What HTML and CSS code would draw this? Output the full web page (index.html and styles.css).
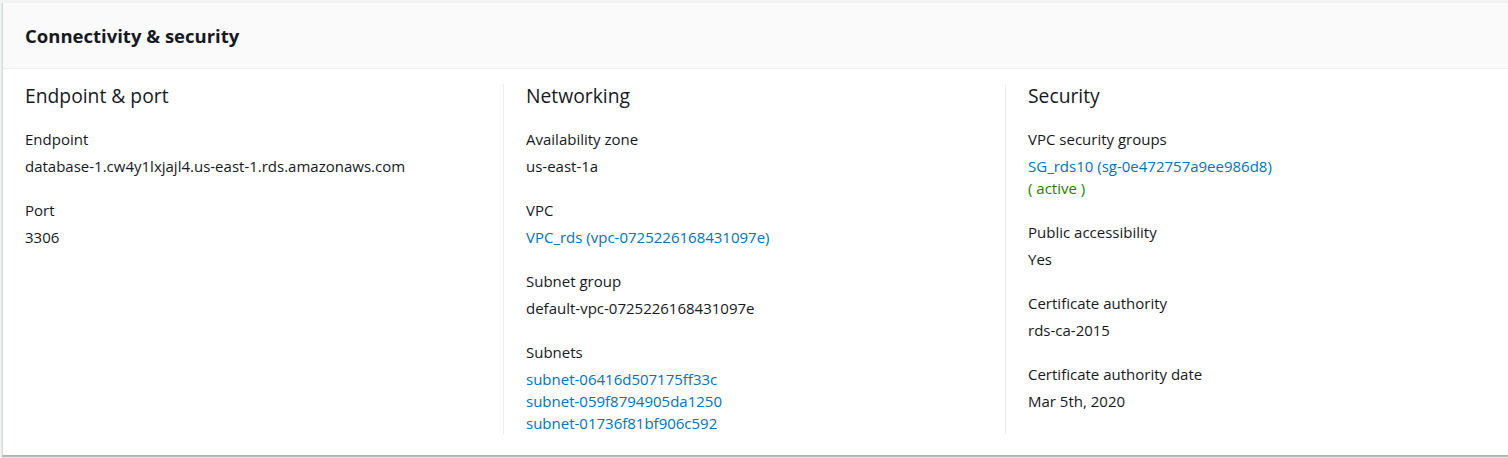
FILE: index.html
```html
<!DOCTYPE html>
<html lang="en">
<head>
<meta charset="utf-8">
<title>Connectivity &amp; security</title>
<link rel="stylesheet" href="styles.css">
</head>
<body>
<section class="card">
  <header class="card-header">
    <h2 class="card-title">Connectivity &amp; security</h2>
  </header>
  <div class="card-body">
    <div class="col">
      <h3 class="col-title">Endpoint &amp; port</h3>
      <div class="field">
        <div class="label">Endpoint</div>
        <div class="value">database-1.cw4y1lxjajl4.us-east-1.rds.amazonaws.com</div>
      </div>
      <div class="field">
        <div class="label">Port</div>
        <div class="value">3306</div>
      </div>
    </div>
    <div class="col col-sep">
      <h3 class="col-title">Networking</h3>
      <div class="field">
        <div class="label">Availability zone</div>
        <div class="value">us-east-1a</div>
      </div>
      <div class="field">
        <div class="label">VPC</div>
        <div class="value"><a class="link" href="#">VPC_rds (vpc-0725226168431097e)</a></div>
      </div>
      <div class="field">
        <div class="label">Subnet group</div>
        <div class="value">default-vpc-0725226168431097e</div>
      </div>
      <div class="field">
        <div class="label">Subnets</div>
        <div class="value"><a class="link" href="#">subnet-06416d507175ff33c</a></div>
        <div class="value"><a class="link" href="#">subnet-059f8794905da1250</a></div>
        <div class="value"><a class="link" href="#">subnet-01736f81bf906c592</a></div>
      </div>
    </div>
    <div class="col col-sep">
      <h3 class="col-title">Security</h3>
      <div class="field">
        <div class="label">VPC security groups</div>
        <div class="value"><a class="link" href="#">SG_rds10 (sg-0e472757a9ee986d8)</a></div>
        <div class="value status-ok">( active )</div>
      </div>
      <div class="field">
        <div class="label">Public accessibility</div>
        <div class="value">Yes</div>
      </div>
      <div class="field">
        <div class="label">Certificate authority</div>
        <div class="value">rds-ca-2015</div>
      </div>
      <div class="field">
        <div class="label">Certificate authority date</div>
        <div class="value">Mar 5th, 2020</div>
      </div>
    </div>
  </div>
</section>
</body>
</html>
```
FILE: styles.css
```css
html, body {
  margin: 0;
  padding: 0;
  overflow: hidden;
}

body {
  background: #f2f3f3;
  padding: 3px 0 0 2px;
  font-family: "Open Sans", "Noto Sans", sans-serif;
  font-size: 15px;
  color: #16191f;
  height: 458px;
  box-sizing: border-box;
}

.card {
  width: 1540px;
  background: #ffffff;
  border-left: 1px solid #d5dbdb;
  border-bottom: 1px solid #aab7b8;
  box-shadow: 0 1px 1px 0 rgba(0, 28, 36, 0.25);
}

.card-header {
  height: 65px;
  display: flex;
  align-items: center;
  padding: 0 22px;
  background: #fafafa;
  border-bottom: 1px solid #eaeded;
}

.card-title {
  margin: 0;
  font-size: 18.5px;
  font-weight: 700;
  line-height: 22px;
}

.card-body {
  display: grid;
  grid-template-columns: 500px 502px 502px;
  padding: 15px 0 21px;
}

.col {
  padding-left: 22px;
}

.col-sep {
  border-left: 1px solid #eaeded;
}

.col-title {
  margin: 0 0 21px;
  padding-top: 1px;
  font-size: 19.3px;
  font-weight: 400;
  line-height: 22px;
}

.field + .field {
  margin-top: 22px;
}

.label {
  line-height: 22px;
  margin-bottom: 5px;
}

.value {
  line-height: 22px;
}

.link {
  color: #0073bb;
  text-decoration: none;
}

.status-ok {
  color: #1d8102;
}
```
